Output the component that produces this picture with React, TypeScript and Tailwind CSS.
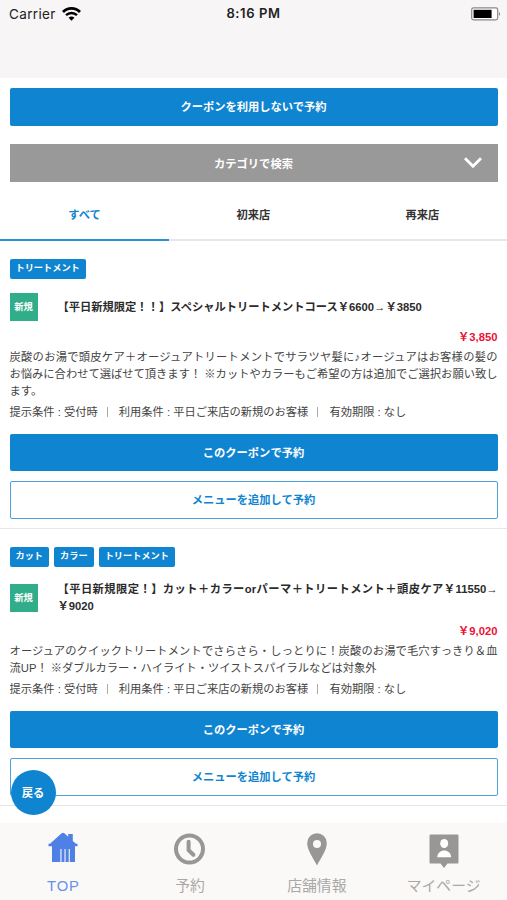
import React, { useState } from "react";

interface Coupon {
  tags: string[];
  title: string[];
  price: string;
  description: string[];
}

const TABS = ["すべて", "初来店", "再来店"];

const COUPONS: Coupon[] = [
  {
    tags: ["トリートメント"],
    title: ["【平日新規限定！！】スペシャルトリートメントコース￥6600→￥3850"],
    price: "￥3,850",
    description: [
      "炭酸のお湯で頭皮ケア＋オージュアトリートメントでサラツヤ髪に♪オージュアはお客様の髪の",
      "お悩みに合わせて選ばせて頂きます！ ※カットやカラーもご希望の方は追加でご選択お願い致し",
      "ます。",
    ],
  },
  {
    tags: ["カット", "カラー", "トリートメント"],
    title: [
      "【平日新規限定！】カット＋カラーorパーマ＋トリートメント＋頭皮ケア￥11550→",
      "￥9020",
    ],
    price: "￥9,020",
    description: [
      "オージュアのクイックトリートメントでさらさら・しっとりに！炭酸のお湯で毛穴すっきり＆血",
      "流UP！ ※ダブルカラー・ハイライト・ツイストスパイラルなどは対象外",
    ],
  },
];

const StatusBar = () => (
  <header className="h-[78px] bg-[#f7f5f6] pt-1">
    <div className="grid h-[18px] grid-cols-3 items-center px-[9px] font-['Inter'] text-[13.5px] text-[#222]">
      <div className="flex items-center gap-[6px]">
        <span className="tracking-[0.35px]">Carrier</span>
        <svg width="19" height="14" viewBox="0 0 19 14" fill="none" stroke="#000">
          <path d="M1 5C5.8.2 13.2.2 18 5" strokeWidth="2.8" />
          <path d="M4 8.2c3.2-3.1 7.8-3.1 11 0" strokeWidth="2.5" />
          <path d="M9.5 13.8 6.6 10.8c1.7-1.6 4.1-1.6 5.8 0z" fill="#000" stroke="none" />
        </svg>
      </div>
      <span className="text-center text-[13px] font-semibold tracking-[0.6px]">
        8:16 PM
      </span>
      <svg className="-mr-[3px] justify-self-end" width="30" height="14" viewBox="0 0 30 14">
        <rect x=".7" y=".9" width="26" height="12" rx="1.8" fill="#fff" stroke="#888" strokeWidth="1.2" />
        <rect x="2.6" y="2.8" width="18" height="8.2" fill="#000" />
        <path d="M28 5.2c1.5.5 1.5 3 0 3.5z" fill="#888" />
      </svg>
    </div>
  </header>
);

// Every line but the last one is stretched to the full column width
const JustifiedLines: React.FC<{ lines: string[] }> = ({ lines }) => (
  <>
    {lines.map((line, index) => (
      <span
        key={line}
        className={`block whitespace-nowrap ${
          index < lines.length - 1 ? "text-justify [text-align-last:justify]" : ""
        }`}
      >
        {line}
      </span>
    ))}
  </>
);

const CouponItem: React.FC<{ coupon: Coupon }> = ({ coupon }) => (
  <article className="border-b border-[#e6e6e6] px-[9.5px] pt-[18px] pb-[9px]">
    <div className="flex gap-[5px]">
      {coupon.tags.map(tag => (
        <span
          key={tag}
          className="flex h-5 items-center rounded-[2px] bg-[#0f84d0] px-[6px] text-[9.2px] font-bold text-white"
        >
          {tag}
        </span>
      ))}
    </div>
    <div className="mt-[14px] flex items-center">
      <span className="flex h-7 w-7 shrink-0 items-center justify-center bg-[#32ad8a] pt-[2px] text-[9.3px] font-bold text-white">
        新規
      </span>
      <h2 className="ml-5 flex-1 leading-[17px] font-bold text-[#2b2b2b]">
        <JustifiedLines lines={coupon.title} />
      </h2>
    </div>
    <p className="mt-[5px] mb-px text-right leading-[22px] font-bold text-[#ed1237]">
      {coupon.price}
    </p>
    <p className="leading-[17px]">
      <JustifiedLines lines={coupon.description} />
    </p>
    <p className="mt-[3px] flex items-center leading-[18px] whitespace-nowrap">
      <span>提示条件 : 受付時</span>
      <span className="ml-[9px] h-[10px] w-px bg-[#aaa]" />
      <span className="ml-[11px]">利用条件 : 平日ご来店の新規のお客様</span>
      <span className="ml-[9px] h-[10px] w-px bg-[#aaa]" />
      <span className="ml-[11px]">有効期限 : なし</span>
    </p>
    <button className="mt-[13px] block h-[37px] w-full rounded-[2px] bg-[#0f84d0] pt-[2px] font-bold text-white">
      このクーポンで予約
    </button>
    <button className="mt-[10px] block h-[38px] w-full rounded-[2px] border border-[#4ca3dc] font-bold text-[#0f84d0]">
      メニューを追加して予約
    </button>
  </article>
);

const NAV_ITEMS = [
  {
    label: "TOP",
    icon: (
      <svg className="mb-[3px]" width="30" height="31" viewBox="0 0 30 31" fill="#4f80e6">
        <path d="M13.6 1.3q1.4-1 2.8 0L20.2 4.7V2h4.6v7L28 11.7h1.5v2.6H27V30h-5.2V17h-1.1v13h-3.1V17h-1.1v13h-3V17h-1.1v13H4V14.3H.5v-2.6H2z" />
      </svg>
    ),
  },
  {
    label: "予約",
    icon: (
      <svg width="32" height="32" viewBox="0 0 32 32" fill="none" stroke="#999795">
        <circle cx="15.5" cy="16" r="13.5" strokeWidth="4" />
        <path d="M14.6 8.8v8.4l4.8 4.6" strokeWidth="4" strokeLinecap="round" />
      </svg>
    ),
  },
  {
    label: "店舗情報",
    icon: (
      <svg width="20" height="33" viewBox="0 0 20 33" fill="#999795">
        <path
          fillRule="evenodd"
          d="M10 .2A9.8 9.8 0 0 0 .2 10C.2 17.5 6 24.5 10 32.5 14 24.5 19.8 17.5 19.8 10A9.8 9.8 0 0 0 10 .2zm0 6.7a4 4 0 1 1 0 8 4 4 0 0 1 0-8z"
        />
      </svg>
    ),
  },
  {
    label: "マイページ",
    icon: (
      <svg className="mt-[3px]" width="30" height="34" viewBox="0 0 30 34">
        <path d="M1.5.5h27q1 0 1 1v27q0 1-1 1H18.5L15 34l-3.5-4.5h-10q-1 0-1-1v-27q0-1 1-1z" fill="#999795" />
        <ellipse cx="15.2" cy="9.5" rx="4" ry="4.6" fill="#fff" />
        <path d="M8.2 23.3c.4-9 13.6-9 14 0z" fill="#fff" />
      </svg>
    ),
  },
];

export default function App() {
  const [activeTab, setActiveTab] = useState(0);

  return (
    <div className="relative flex h-[900px] w-[507px] flex-col overflow-hidden bg-white font-['Liberation_Sans','Noto_Sans_CJK_JP',sans-serif] text-[11.28px] text-[#444]">
      <StatusBar />
      <main className="h-[745px] overflow-hidden">
        <div className="px-[9.5px] pt-[10px]">
          <button className="block h-[38px] w-full rounded-[2px] bg-[#0f84d0] font-bold text-white">
            クーポンを利用しないで予約
          </button>
          <button className="relative mt-[18px] block h-[38px] w-full bg-[#999] pt-[2px] font-bold text-white">
            カテゴリで検索
            <svg
              className="absolute top-[13px] right-4"
              width="18"
              height="12"
              viewBox="0 0 18 12"
              fill="none"
              stroke="#fff"
              strokeWidth="2.8"
            >
              <path d="m1 1.3 8 8 8-8" />
            </svg>
          </button>
        </div>
        <nav className="grid h-[59px] grid-cols-3">
          {TABS.map((tab, index) => (
            <button
              key={tab}
              onClick={() => setActiveTab(index)}
              className={`border-b-2 pt-[9px] font-bold ${
                activeTab === index
                  ? "border-[#2a90d5] text-[#0f84d0]"
                  : "border-[#e8e8e8] text-[#333]"
              }`}
            >
              {tab}
            </button>
          ))}
        </nav>
        {COUPONS.map(coupon => (
          <CouponItem key={coupon.price} coupon={coupon} />
        ))}
      </main>
      <button className="absolute top-[770px] left-[10.5px] h-[45px] w-[45px] rounded-full bg-[#0f84d0] pt-[2px] font-bold text-white">
        戻る
      </button>
      <footer className="grid h-[77px] grid-cols-4 bg-[#faf9f7]">
        {NAV_ITEMS.map(({ label, icon }, index) => (
          <button
            key={label}
            className={`flex flex-col items-center pt-[9px] text-[14.8px] ${
              index === 0
                ? "tracking-[0.8px] text-[#6790ea]"
                : "text-[#aaa8a6]"
            }`}
          >
            <span className="flex h-[34px] items-center">{icon}</span>
            <span className="mt-[9px] leading-[22px] whitespace-nowrap">{label}</span>
          </button>
        ))}
      </footer>
    </div>
  );
}
